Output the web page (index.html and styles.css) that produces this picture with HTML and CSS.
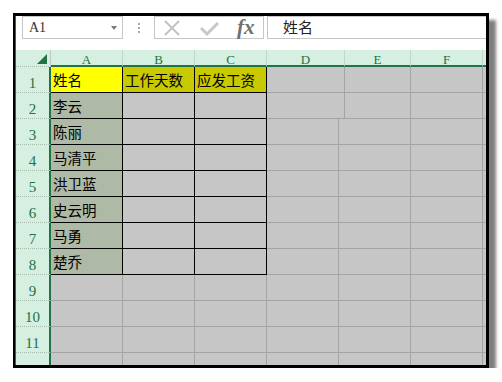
FILE: index.html
```html
<!DOCTYPE html>
<html lang="zh-CN">
<head>
    <meta charset="UTF-8">
    <meta name="viewport" content="width=device-width, initial-scale=1.0">
    <title>工资表</title>
    <link rel="stylesheet" href="styles.css">
</head>
<body>
    <div class="window">
        <div class="inner">
            <!-- Formula bar -->
            <div class="toolbar">
                <div class="namebox">
                    <span>A1</span>
                    <span class="caret"></span>
                </div>
                <div class="grip"><i></i><i></i><i></i></div>
                <div class="fxbox">
                    <svg class="icon-x" width="16" height="16" viewBox="0 0 16 16">
                        <path d="M1 1 L15 15 M15 1 L1 15" stroke="#c2c2c2" stroke-width="2" fill="none"/>
                    </svg>
                    <svg class="icon-ok" width="19" height="14" viewBox="0 0 19 14">
                        <path d="M1 6 L7 12 L18 1" stroke="#c8c8c8" stroke-width="3" fill="none"/>
                    </svg>
                    <span class="fx">fx</span>
                </div>
                <div class="formula">姓名</div>
            </div>

            <!-- Sheet -->
            <div class="sheet">
                <div class="colheads">
                    <div class="corner">
                        <svg width="10" height="10" viewBox="0 0 10 10">
                            <polygon points="0,10 10,0 10,10" fill="#217346"/>
                        </svg>
                    </div>
                    <div class="colhead">A</div>
                    <div class="colhead">B</div>
                    <div class="colhead">C</div>
                    <div class="colhead d-wide">D</div>
                    <div class="colhead e-narrow">E</div>
                    <div class="colhead">F</div>
                    <div class="colhead"></div>
                </div>
                <div class="body">
                    <div class="rowheads">
                        <div class="rowhead">1</div>
                        <div class="rowhead">2</div>
                        <div class="rowhead">3</div>
                        <div class="rowhead">4</div>
                        <div class="rowhead">5</div>
                        <div class="rowhead">6</div>
                        <div class="rowhead">7</div>
                        <div class="rowhead">8</div>
                        <div class="rowhead">9</div>
                        <div class="rowhead">10</div>
                        <div class="rowhead">11</div>
                        <div class="rowhead"></div>
                    </div>
                    <div class="cells" id="cells"></div>
                </div>
            </div>
        </div>
    </div>

    <script>
        const names = ['李云', '陈丽', '马清平', '洪卫蓝', '史云明', '马勇', '楚乔'];
        const cells = document.getElementById('cells');

        function cell(cls, text) {
            return `<div class="cell ${cls}">${text || ''}</div>`;
        }

        // row 1 = header of the table, rows 2-8 = names, rest empty
        let html = '<div class="row">' +
            cell('in yellow', '姓名') + cell('in olive', '工作天数') + cell('in olive', '应发工资') +
            cell('d-wide') + cell('e-narrow') + cell('') + cell('') + '</div>';

        for (let r = 2; r <= 12; r++) {
            const name = names[r - 2];
            const wide = r === 2 ? ' d-wide' : '';
            const narrow = r === 2 ? ' e-narrow' : '';
            html += '<div class="row">';
            if (name) {
                html += cell('in name', name) + cell('in') + cell('in');
            } else {
                html += cell('') + cell('') + cell('');
            }
            html += cell(wide) + cell(narrow) + cell('') + cell('') + '</div>';
        }
        cells.innerHTML = html;
    </script>
</body>
</html>
```

FILE: styles.css
```css
* {
    margin: 0;
    padding: 0;
    box-sizing: border-box;
}
body {
    background-color: #ffffff;
    font-family: "Noto Sans CJK SC", "Liberation Sans", sans-serif;
}
.window {
    width: 476px;
    height: 355px;
    margin: 13px 0 0 13px;
    border: 3px solid #000;
    border-left-width: 2px;
    box-shadow: 7px 7px 3px rgba(0, 0, 0, 0.5);
    background-color: #fff;
}
.inner {
    height: 100%;
    border-left: 1px solid #217346;
    overflow: hidden;
}

/* formula bar */
.toolbar {
    display: flex;
    height: 23px;
    margin-bottom: 11px;
}
.namebox {
    width: 101px;
    margin-left: 6px;
    border: 1px solid #c6c6c6;
    display: flex;
    align-items: center;
    justify-content: space-between;
    padding: 0 5px 0 6px;
    font-family: "Liberation Serif", serif;
    font-size: 14px;
    color: #333;
}
.caret {
    width: 0;
    height: 0;
    border-left: 3px solid transparent;
    border-right: 3px solid transparent;
    border-top: 4px solid #7a7a7a;
}
.grip {
    width: 31px;
    display: flex;
    flex-direction: column;
    align-items: center;
    justify-content: center;
    gap: 2px;
}
.grip i {
    width: 2px;
    height: 2px;
    background-color: #a8a8a8;
}
.fxbox {
    width: 110px;
    border: 1px solid #c6c6c6;
    display: flex;
    align-items: center;
    padding-left: 9px;
}
.icon-x {
    margin-top: 1px;
}
.icon-ok {
    margin-left: 20px;
    margin-top: 3px;
}
.fx {
    margin-left: 18px;
    font-family: "Liberation Serif", serif;
    font-style: italic;
    font-weight: bold;
    font-size: 21px;
    line-height: 21px;
    color: #707070;
}
.formula {
    flex: 1;
    margin-left: 3px;
    border: 1px solid #c6c6c6;
    border-right: none;
    padding-left: 15px;
    font-size: 15px;
    line-height: 20px;
    color: #222;
}

/* sheet */
.colheads {
    display: flex;
    height: 17px;
    background-color: #d5efe1;
}
.corner {
    width: 35px;
    flex-shrink: 0;
    border-right: 1px solid #bccabf;
    border-bottom: 1px dotted #a9bdb0;
    display: flex;
    justify-content: flex-end;
    align-items: flex-end;
    padding: 0 3px 2px 0;
}
.colhead {
    width: 72px;
    flex-shrink: 0;
    border-right: 1px solid #c3d6ca;
    border-bottom: 2px solid #217346;
    text-align: center;
    font-family: "Liberation Serif", serif;
    font-size: 13px;
    line-height: 12px;
    padding-top: 4px;
    color: #217346;
}
.body {
    display: flex;
}
.rowheads {
    width: 35px;
    flex-shrink: 0;
    background-color: #d5efe1;
}
.rowhead {
    height: 26px;
    border-right: 2px solid #217346;
    border-bottom: 1px dotted #a9bdb0;
    display: flex;
    align-items: flex-end;
    justify-content: center;
    padding-bottom: 2px;
    font-family: "Liberation Serif", serif;
    font-size: 15px;
    line-height: 14px;
    color: #217346;
}
.cells {
    flex: 1;
    min-width: 0;
    overflow: hidden;
}
.row {
    display: flex;
    height: 26px;
}
.cell {
    width: 72px;
    flex-shrink: 0;
    background-color: #c6c6c6;
    border-right: 1px solid #a4a4a4;
    border-bottom: 1px solid #a4a4a4;
    padding-left: 2px;
    font-size: 14.5px;
    line-height: 25px;
    color: #000;
    white-space: nowrap;
}
.cell.in {
    border-color: #000;
}
.cell.yellow {
    background-color: #ffff00;
}
.cell.olive {
    background-color: #c9c900;
}
.cell.name {
    background-color: #aeb9a6;
}
.d-wide {
    width: 78px;
}
.e-narrow {
    width: 66px;
}
```
